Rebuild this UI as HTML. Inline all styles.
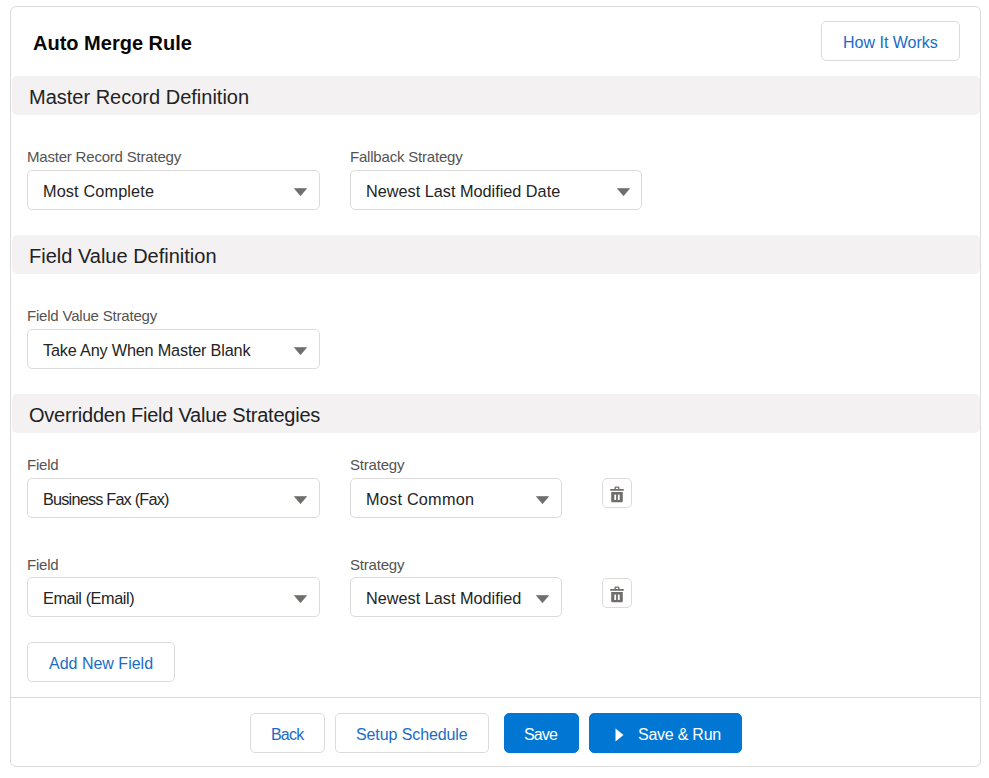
<!DOCTYPE html>
<html><head><meta charset="utf-8">
<style>
*{box-sizing:border-box;margin:0;padding:0}
html,body{width:989px;height:778px;background:#fff;overflow:hidden;font-family:"Liberation Sans",sans-serif;color:#080707}
.abs{position:absolute}
.card{position:absolute;left:10px;top:6px;width:971px;height:761px;border:1px solid #dddbda;border-radius:6px;background:#fff}
.t{position:absolute;white-space:nowrap;line-height:20px}
.title{font-size:20px;font-weight:700;color:#080707}
.band{position:absolute;left:12px;width:968px;height:39px;background:#f3f1f2;border-radius:5px}
.bt{font-size:20px;color:#222}
.lbl{font-size:15px;color:#555352;letter-spacing:-0.2px}
.inp{position:absolute;height:40px;border:1px solid #dddbda;border-radius:5px;background:#fff}
.val{font-size:16.25px;color:#242424}
.arr{position:absolute;width:13px;height:8px}
.btn{position:absolute;height:40px;border:1px solid #dddbda;border-radius:5px;background:#fff}
.bl{font-size:16px;color:#1a6cc6}
.brand{position:absolute;height:40px;border:1px solid #0176d3;border-radius:5px;background:#0176d3}
.wl{font-size:16px;color:#fff}
.ib{position:absolute;width:30px;height:30px;border:1px solid #dddbda;border-radius:5px;background:#fff}
.div{position:absolute;left:11px;top:697px;width:969px;height:1px;background:#dddbda}
</style></head>
<body>
<div class="card"></div>

<div class="t title" style="left:33px;top:33px">Auto Merge Rule</div>
<div class="btn" style="left:821px;top:21px;width:139px"></div>
<div class="t bl" style="left:843px;top:33px">How It Works</div>

<!-- Section 1 -->
<div class="band" style="top:76px"></div>
<div class="t bt" style="left:29px;top:87px">Master Record Definition</div>
<div class="t lbl" style="left:27px;top:147px">Master Record Strategy</div>
<div class="inp" style="left:27px;top:170px;width:293px"></div>
<div class="t val" style="left:43px;top:180.5px;letter-spacing:0.14px">Most Complete</div>
<svg class="arr" style="left:294px;top:188px" viewBox="0 0 13 8"><path d="M0 0.2 L13 0.2 L6.5 8 Z" fill="#706e6b" stroke="#706e6b" stroke-width="0.3" stroke-linejoin="round"/></svg>

<div class="t lbl" style="left:350px;top:147px">Fallback Strategy</div>
<div class="inp" style="left:350px;top:170px;width:292px"></div>
<div class="t val" style="left:366px;top:180.5px">Newest Last Modified Date</div>
<svg class="arr" style="left:617px;top:188px" viewBox="0 0 13 8"><path d="M0 0.2 L13 0.2 L6.5 8 Z" fill="#706e6b" stroke="#706e6b" stroke-width="0.3" stroke-linejoin="round"/></svg>

<!-- Section 2 -->
<div class="band" style="top:235px"></div>
<div class="t bt" style="left:29px;top:246px">Field Value Definition</div>
<div class="t lbl" style="left:27px;top:306px">Field Value Strategy</div>
<div class="inp" style="left:27px;top:329px;width:293px"></div>
<div class="t val" style="left:43px;top:339.5px;letter-spacing:-0.19px">Take Any When Master Blank</div>
<svg class="arr" style="left:294px;top:347px" viewBox="0 0 13 8"><path d="M0 0.2 L13 0.2 L6.5 8 Z" fill="#706e6b" stroke="#706e6b" stroke-width="0.3" stroke-linejoin="round"/></svg>

<!-- Section 3 -->
<div class="band" style="top:394px"></div>
<div class="t bt" style="left:29px;top:405px;letter-spacing:-0.23px">Overridden Field Value Strategies</div>

<div class="t lbl" style="left:27px;top:455px">Field</div>
<div class="inp" style="left:27px;top:478px;width:293px"></div>
<div class="t val" style="left:43px;top:488.5px;letter-spacing:-0.8px">Business Fax (Fax)</div>
<svg class="arr" style="left:294px;top:496px" viewBox="0 0 13 8"><path d="M0 0.2 L13 0.2 L6.5 8 Z" fill="#706e6b" stroke="#706e6b" stroke-width="0.3" stroke-linejoin="round"/></svg>
<div class="t lbl" style="left:350px;top:455px">Strategy</div>
<div class="inp" style="left:350px;top:478px;width:212px"></div>
<div class="t val" style="left:366px;top:488.5px;letter-spacing:0.23px">Most Common</div>
<svg class="arr" style="left:536px;top:496px" viewBox="0 0 13 8"><path d="M0 0.2 L13 0.2 L6.5 8 Z" fill="#706e6b" stroke="#706e6b" stroke-width="0.3" stroke-linejoin="round"/></svg>
<div class="ib" style="left:602px;top:478px"></div>
<svg class="abs" style="left:609px;top:486px" width="16" height="17" viewBox="0 0 16 17"><path d="M5.5 3.4v-1.6a1.4 1.4 0 0 1 1.4-1.4h2.2a1.4 1.4 0 0 1 1.4 1.4v1.6h-1.4v-1.6h-2.2v1.6z" fill="#706e6b"/><rect x="1" y="2.9" width="14" height="1.8" rx="0.9" fill="#706e6b"/><path d="M2.2 6h11.6v9a1.2 1.2 0 0 1-1.2 1.2h-9.2a1.2 1.2 0 0 1-1.2-1.2z" fill="#706e6b"/><rect x="5.3" y="8.6" width="1.8" height="5.4" fill="#fff"/><rect x="8.9" y="8.6" width="1.8" height="5.4" fill="#fff"/></svg>

<div class="t lbl" style="left:27px;top:555px">Field</div>
<div class="inp" style="left:27px;top:577px;width:293px"></div>
<div class="t val" style="left:43px;top:588px;letter-spacing:-0.42px">Email (Email)</div>
<svg class="arr" style="left:294px;top:595px" viewBox="0 0 13 8"><path d="M0 0.2 L13 0.2 L6.5 8 Z" fill="#706e6b" stroke="#706e6b" stroke-width="0.3" stroke-linejoin="round"/></svg>
<div class="t lbl" style="left:350px;top:555px">Strategy</div>
<div class="inp" style="left:350px;top:577px;width:212px"></div>
<div class="t val" style="left:366px;top:588px">Newest Last Modified</div>
<svg class="arr" style="left:536px;top:595px" viewBox="0 0 13 8"><path d="M0 0.2 L13 0.2 L6.5 8 Z" fill="#706e6b" stroke="#706e6b" stroke-width="0.3" stroke-linejoin="round"/></svg>
<div class="ib" style="left:602px;top:578px"></div>
<svg class="abs" style="left:609px;top:586px" width="16" height="17" viewBox="0 0 16 17"><path d="M5.5 3.4v-1.6a1.4 1.4 0 0 1 1.4-1.4h2.2a1.4 1.4 0 0 1 1.4 1.4v1.6h-1.4v-1.6h-2.2v1.6z" fill="#706e6b"/><rect x="1" y="2.9" width="14" height="1.8" rx="0.9" fill="#706e6b"/><path d="M2.2 6h11.6v9a1.2 1.2 0 0 1-1.2 1.2h-9.2a1.2 1.2 0 0 1-1.2-1.2z" fill="#706e6b"/><rect x="5.3" y="8.6" width="1.8" height="5.4" fill="#fff"/><rect x="8.9" y="8.6" width="1.8" height="5.4" fill="#fff"/></svg>

<div class="btn" style="left:27px;top:642px;width:148px"></div>
<div class="t bl" style="left:49px;top:654px">Add New Field</div>

<div class="div"></div>

<div class="btn" style="left:250px;top:713px;width:75px"></div>
<div class="t bl" style="left:271px;top:725px;letter-spacing:-0.8px">Back</div>
<div class="btn" style="left:335px;top:713px;width:154px"></div>
<div class="t bl" style="left:356px;top:725px;letter-spacing:-0.1px">Setup Schedule</div>
<div class="brand" style="left:504px;top:713px;width:75px"></div>
<div class="t wl" style="left:524px;top:725px;letter-spacing:-0.87px">Save</div>
<div class="brand" style="left:589px;top:713px;width:153px"></div>
<svg class="abs" style="left:615px;top:728px" width="9" height="14" viewBox="0 0 9 14"><path d="M0.5 0.5 L8.5 7 L0.5 13.5 Z" fill="#fff"/></svg>
<div class="t wl" style="left:638px;top:725px;letter-spacing:-0.24px">Save &amp; Run</div>
</body></html>
